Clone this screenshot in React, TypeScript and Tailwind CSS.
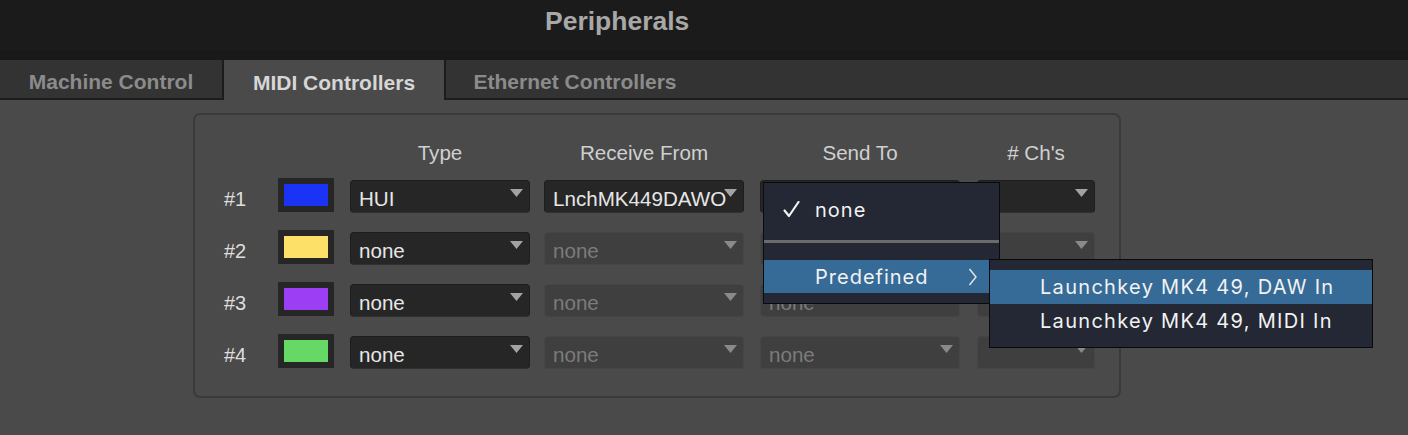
import React from "react";

type Row = {
  n: string;
  swatch: string;
  type: string;
  recv: string;
  recvDis: boolean;
  send: string;
  sendDis: boolean;
  chDis: boolean;
};

const rows: Row[] = [
  { n: "#1", swatch: "bg-[#1a33f5]", type: "HUI", recv: "LnchMK449DAWO", recvDis: false, send: "none", sendDis: false, chDis: false },
  { n: "#2", swatch: "bg-[#fce067]", type: "none", recv: "none", recvDis: true, send: "none", sendDis: true, chDis: true },
  { n: "#3", swatch: "bg-[#9c3ff4]", type: "none", recv: "none", recvDis: true, send: "none", sendDis: true, chDis: true },
  { n: "#4", swatch: "bg-[#66d866]", type: "none", recv: "none", recvDis: true, send: "none", sendDis: true, chDis: true },
];

function Arrow({ disabled }: { disabled?: boolean }) {
  return (
    <svg className="absolute right-[6px] top-[8px]" width="13" height="8" viewBox="0 0 13 8">
      <path d="M0 0H13L6.5 8Z" fill={disabled ? "#8a8a8a" : "#a3a3a3"} />
    </svg>
  );
}

function Select({ w, text, disabled }: { w: string; text: string; disabled?: boolean }) {
  return (
    <div
      className={`relative h-[33px] shrink-0 rounded-[4px] overflow-hidden whitespace-nowrap flex items-center pl-[8px] pt-[5px] text-[20.6px] leading-none ${w} ${
        disabled
          ? "bg-[#3f3f3f] border border-[#454545] text-[#7b7b7b]"
          : "bg-[#262626] border border-[#1e1e1e] border-b-[#303030] text-[#e6e6e6]"
      }`}
    >
      {text}
      <Arrow disabled={disabled} />
    </div>
  );
}

export default function App() {
  return (
    <div
      className="relative w-[1408px] h-[435px] overflow-hidden bg-[#4a4a4a]"
      style={{ fontFamily: '"Liberation Sans", Arial, sans-serif' }}
    >
      {/* Title bar */}
      <div className="h-[50px] bg-[#1b1b1b] pl-[545px] pt-[7px]">
        <div className="text-[26.5px] leading-[28px] font-bold text-[#a8a8a8]">Peripherals</div>
      </div>
      <div className="h-[10px] bg-[#191919]" />

      {/* Tabs */}
      <div className="flex h-[40px] bg-[#333333]">
        <div className="w-[224px] border-r-2 border-b-2 border-[#1c1c1c] flex items-center justify-center pt-[6px] text-[21px] font-bold text-[#8b8b8b]">
          Machine Control
        </div>
        <div className="w-[220px] bg-[#4a4a4a] flex items-center justify-center pt-[6px] text-[21px] font-bold text-[#d6d6d6]">
          MIDI Controllers
        </div>
        <div className="flex-1 flex border-b-2 border-[#1c1c1c]">
          <div className="w-[260px] border-l-2 border-[#1c1c1c] flex items-center justify-center pt-[6px] text-[21px] font-bold text-[#8b8b8b]">
            Ethernet Controllers
          </div>
        </div>
      </div>

      {/* Content */}
      <div className="pt-[13px] pl-[193px]">
        <div className="w-[928px] h-[285px] border-2 border-[#3a3a3a] rounded-[7px] pt-[26px] pl-[29px]">
          {/* headers */}
          <div className="flex h-[24px] leading-[24px] text-[20.6px] text-[#d0d0d0]">
            <div className="w-[54px]" />
            <div className="w-[56px]" />
            <div className="w-[180px] ml-[16px] text-center">Type</div>
            <div className="w-[200px] ml-[14px] text-center">Receive From</div>
            <div className="w-[200px] ml-[16px] text-center">Send To</div>
            <div className="w-[118px] ml-[17px] text-center">{"# Ch's"}</div>
          </div>
          <div className="mt-[15px] flex flex-col gap-[19px]">
            {rows.map((r) => (
              <div key={r.n} className="flex items-start h-[33px]">
                <div className="w-[54px] h-[33px] flex items-center pt-[5px] leading-none text-[20px] text-[#dedede]">
                  {r.n}
                </div>
                <div className="w-[56px] h-[34px] -mt-[2px] bg-[#262626] p-[6px] shrink-0">
                  <div className={`w-full h-full ${r.swatch}`} />
                </div>
                <div className="ml-[16px]">
                  <Select w="w-[180px]" text={r.type} />
                </div>
                <div className="ml-[14px]">
                  <Select w="w-[200px]" text={r.recv} disabled={r.recvDis} />
                </div>
                <div className="ml-[16px]">
                  <Select w="w-[200px]" text={r.send} disabled={r.sendDis} />
                </div>
                <div className="ml-[17px]">
                  <Select w="w-[118px]" text="" disabled={r.chDis} />
                </div>
              </div>
            ))}
          </div>
        </div>
      </div>

      {/* Popup menu */}
      <div
        className="absolute left-[763px] top-[182px] w-[237px] h-[122px] bg-[#232834] border border-[#0a0a0a] pt-[10px] text-[20px] tracking-[1px] text-[#f2f2f2]"
        style={{ fontFamily: 'Inter, "DejaVu Sans", sans-serif' }}
      >
        <div className="relative h-[33px] flex items-center pl-[51px]">
          <svg className="absolute left-[19px] top-[8px]" width="17" height="17" viewBox="0 0 17 17">
            <path d="M1.5 9.5L6 15L15.5 1" fill="none" stroke="#f2f2f2" strokeWidth="2.2" strokeLinecap="round" strokeLinejoin="round" />
          </svg>
          none
        </div>
        <div className="mt-[14px] h-[3px] bg-[#6b6b6b]" />
        <div className="mt-[17px] relative h-[33px] bg-[#366b97] flex items-center pl-[51px]">
          Predefined
          <svg className="absolute left-[204px] top-[8px]" width="10" height="18" viewBox="0 0 10 18">
            <path d="M1.5 1L8 9L1.5 17" fill="none" stroke="#e8e8e8" strokeWidth="1.4" />
          </svg>
        </div>
      </div>

      {/* Submenu */}
      <div
        className="absolute left-[989px] top-[259px] w-[384px] h-[89px] bg-[#232834] border border-[#0a0a0a] pt-[10px] text-[20px] tracking-[1.3px] text-[#f2f2f2]"
        style={{ fontFamily: 'Inter, "DejaVu Sans", sans-serif' }}
      >
        <div className="h-[34px] bg-[#366b97] flex items-center pl-[50px]">Launchkey MK4 49, DAW In</div>
        <div className="h-[34px] flex items-center pl-[50px]">Launchkey MK4 49, MIDI In</div>
      </div>
    </div>
  );
}
